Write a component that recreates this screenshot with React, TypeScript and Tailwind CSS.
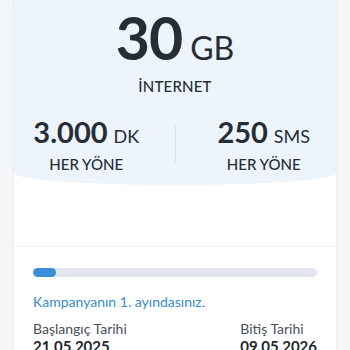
import React from 'react';

const font = { fontFamily: '"Lato", "Noto Sans", sans-serif' };

export default function App() {
  const progress = 8; // percent

  return (
    <div className="w-[350px] h-[350px] overflow-hidden bg-[#f4f6f8] px-[14px]" style={font}>
      <div className="bg-white shadow-[0_0_3px_rgba(0,0,0,0.08)] h-[400px]">
        {/* top allowance */}
        <div className="bg-[#edf4fb] rounded-b-[50%_12px] pt-[6px] pb-[10px]">
          <div className="flex items-baseline justify-center gap-[8px] text-[#262d36]">
            <span className="text-[59px] font-bold leading-[64px] tracking-[-1px]">30</span>
            <span className="text-[32px] font-normal">GB</span>
          </div>
          <div className="text-center text-[15px] font-medium text-[#262d36] mt-[3px] tracking-[0.2px]">İNTERNET</div>

          <div className="flex justify-center items-center mt-[18px]">
            <div className="w-[150px] flex flex-col items-center">
              <div className="flex items-baseline gap-[6px] text-[#262d36]">
                <span className="text-[29px] font-bold leading-[32px]">3.000</span>
                <span className="text-[18px]">DK</span>
              </div>
              <span className="text-[15px] font-medium text-[#262d36] mt-[3px]">HER YÖNE</span>
            </div>
            <div className="w-px h-[40px] bg-[#dde4ec] mx-[16px]" />
            <div className="w-[150px] flex flex-col items-center">
              <div className="flex items-baseline gap-[6px] text-[#262d36]">
                <span className="text-[29px] font-bold leading-[32px]">250</span>
                <span className="text-[18px]">SMS</span>
              </div>
              <span className="text-[15px] font-medium text-[#262d36] mt-[3px]">HER YÖNE</span>
            </div>
          </div>
        </div>

        <div className="h-[61px]" />

        {/* campaign period */}
        <div className="border-t border-[#eceef2] px-[19px] pt-[21px]">
          <div className="h-[9px] rounded-full bg-[#e3e6ee] overflow-hidden">
            <div className="h-full rounded-full bg-[#3b8fd6]" style={{ width: `${progress}%` }} />
          </div>
          <div className="mt-[14px] text-[14px] text-[#3a8bc8]">Kampanyanın 1. ayındasınız.</div>
          <div className="flex justify-between mt-[8px]">
            <div className="flex flex-col">
              <span className="text-[14px] leading-[17px] text-[#4a5058]">Başlangıç Tarihi</span>
              <span className="text-[15px] leading-[18px] font-bold text-[#1f252c]">21.05.2025</span>
            </div>
            <div className="flex flex-col">
              <span className="text-[14px] leading-[17px] text-[#4a5058]">Bitiş Tarihi</span>
              <span className="text-[15px] leading-[18px] font-bold text-[#1f252c]">09.05.2026</span>
            </div>
          </div>
        </div>
      </div>
    </div>
  );
}
